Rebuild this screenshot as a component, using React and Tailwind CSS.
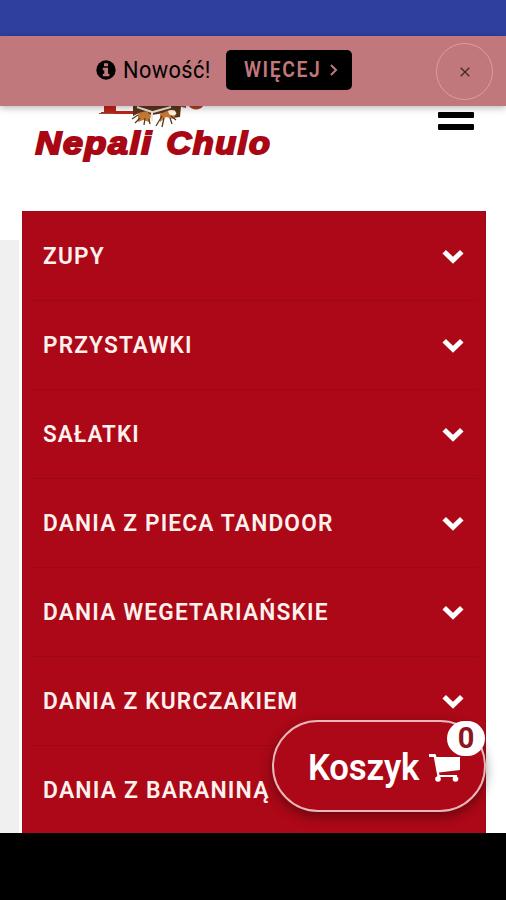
import React from "react";

const items = [
  { label: "ZUPY", scale: "scale-x-[0.965]" },
  { label: "PRZYSTAWKI", scale: "scale-x-[0.963]" },
  { label: "SAŁATKI", scale: "scale-x-[0.952]" },
  { label: "DANIA Z PIECA TANDOOR", scale: "scale-x-[0.966]" },
  { label: "DANIA WEGETARIAŃSKIE", scale: "scale-x-[0.966]" },
  { label: "DANIA Z KURCZAKIEM", scale: "scale-x-[0.968]" },
  { label: "DANIA Z BARANINĄ", scale: "scale-x-[0.976]" },
];

function Logo() {
  return (
    <svg className="block" width="260" height="64" viewBox="0 0 260 64">
      <path d="M70 0h12v5h17v3H67V6h3z" fill="#bd2419" />
      <path d="M65 7.5h15" stroke="#8b5748" strokeWidth="1" />
      <path d="M99 0h48l-1 11-7 1-9-5-12 2-13-2-6 3z" fill="#59351b" />
      <path d="M103 1l15 5v9M119 6l18-5" stroke="#eee4dc" strokeWidth="2" fill="none" />
      <path d="M104 7l9-2 4 5-2 6-6-2-5 2zM126 8l9-4 8 3-4 6-7-2-6 5z" fill="#c27735" />
      <path d="M104 9l-6 4m8-1l-5 5m10-5l-1 7m5-6l1 5m12-8l-6 10m8-8l-2 9m8-9l2 6m-1-8l5 4" stroke="#5b391e" strokeWidth="1.3" fill="none" />
      <path d="M134 5c4-2 8-1 8 2s-4 3-7 1z" fill="#fff4e2" />
      <path d="M152 0h-8l8 2zM155 0h14c-2 4-11 5-14 0z" fill="#a74427" />
      <g fill="#a90713" stroke="#a90713" strokeWidth="2" fontFamily="Liberation Sans, sans-serif" fontSize="31" fontWeight="700" fontStyle="italic" letterSpacing="1.5">
        <text x="1.5" y="47.5" textLength="117.5" lengthAdjust="spacingAndGlyphs">Nepali</text>
        <text x="132.5" y="47.5" textLength="105" lengthAdjust="spacingAndGlyphs">Chulo</text>
      </g>
    </svg>
  );
}

function Chevron() {
  return (
    <svg width="22" height="15" viewBox="0 0 22 15" fill="none" stroke="#fff" strokeWidth="5">
      <path d="M2.2 2.7l8.8 8.5 8.8-8.5" />
    </svg>
  );
}

export default function App() {
  return (
    <div className="relative flex h-[900px] w-[506px] flex-col overflow-hidden bg-white font-['Roboto','Noto_Sans',sans-serif]">
      <div className="h-9 shrink-0 bg-[#2f3f9e]" />
      <div className="z-10 flex h-[70px] shrink-0 items-center bg-[#c1787c] pr-[13px] pl-24 shadow-[0_2px_7px_rgba(0,0,0,0.28)]">
        <svg className="-mt-0.5" width="20" height="20" viewBox="0 0 20 20">
          <circle cx="10" cy="10" r="9.7" />
          <path d="M8 3.2h4v3H8zM6.8 7.7H12v6h1.4v2.5H6.8v-2.5h1.5v-3.5H6.8z" fill="#c1787c" />
        </svg>
        <span className="ml-[7px] -mt-0.5 w-[96px] origin-left scale-x-[0.945] text-[23px] leading-none tracking-[0.45px] whitespace-nowrap">Nowość!</span>
        <div className="ml-[7px] -mt-0.5 flex h-10 w-[126px] items-center rounded-[5px] bg-black pl-[18px] text-[#c1787c]">
          <span className="w-[86px] origin-left scale-x-[0.88] text-[22px] leading-none font-semibold tracking-[1.8px] whitespace-nowrap">WIĘCEJ</span>
          <svg width="8" height="12" viewBox="0 0 8 12" fill="none" stroke="currentColor" strokeWidth="2">
            <path d="M1 1l5 5-5 5" />
          </svg>
        </div>
        <div className="ml-auto flex size-[57px] items-center justify-center rounded-full border border-[#e29a9e]">
          <svg className="mt-0.5" width="10" height="10" viewBox="0 0 10 10" stroke="#43282a" strokeWidth="1.3">
            <path d="M.7.7l8.6 8.6M9.3.7L.7 9.3" />
          </svg>
        </div>
      </div>
      <header className="flex h-[105px] shrink-0 items-start justify-between pr-8 pl-[34px]">
        <Logo />
        <div className="mt-1.5 flex w-9 flex-col gap-1.5">
          <div className="h-1.5 rounded-[1px] bg-black" />
          <div className="h-1.5 rounded-[1px] bg-black" />
        </div>
      </header>
      <main className="flex h-[622px] shrink-0 overflow-hidden">
        <div className="mt-[29px] mr-[3px] w-[19px] bg-[#f0f0f0]" />
        <nav className="w-[464px] border-x border-t border-[#9b0b16] bg-[#ac0817]">
          {items.map((item) => (
            <div key={item.label} className="mx-1.5 flex h-[89px] items-center justify-between border-b border-[#9c0814] pr-[15px] pl-3.5">
              <span className={`mt-0.5 origin-left text-[23.5px] leading-none font-semibold tracking-[1.2px] whitespace-nowrap text-[#fff1ee] ${item.scale}`}>{item.label}</span>
              <Chevron />
            </div>
          ))}
        </nav>
      </main>
      <footer className="h-[67px] shrink-0 bg-black" />
      <div className="absolute top-[720px] left-[272px] z-20 flex h-[92px] w-[214px] items-center rounded-full border-2 border-[#e9b5b7] bg-[#ac0817] pl-[34px] text-white shadow-[0_4px_12px_rgba(0,0,0,0.4)]">
        <span className="mt-[3px] w-[121px] origin-left scale-x-[0.965] text-[36px] leading-none font-semibold tracking-[-0.2px]">Koszyk</span>
        <svg className="mt-1" width="32" height="28" viewBox="0 0 32 28" fill="#fff">
          <path d="M0 0h6.5l1 3H31v13L10 18.5l.5 2.5H28v2H8.5L4.8 3H0z" />
          <circle cx="9" cy="25" r="2.8" />
          <circle cx="26.5" cy="25" r="2.8" />
        </svg>
        <div className="absolute -top-px right-[-1px] flex h-[35px] w-[38px] items-center justify-center rounded-full bg-white text-[29px] leading-none font-bold text-[#8d1520]">0</div>
      </div>
    </div>
  );
}
